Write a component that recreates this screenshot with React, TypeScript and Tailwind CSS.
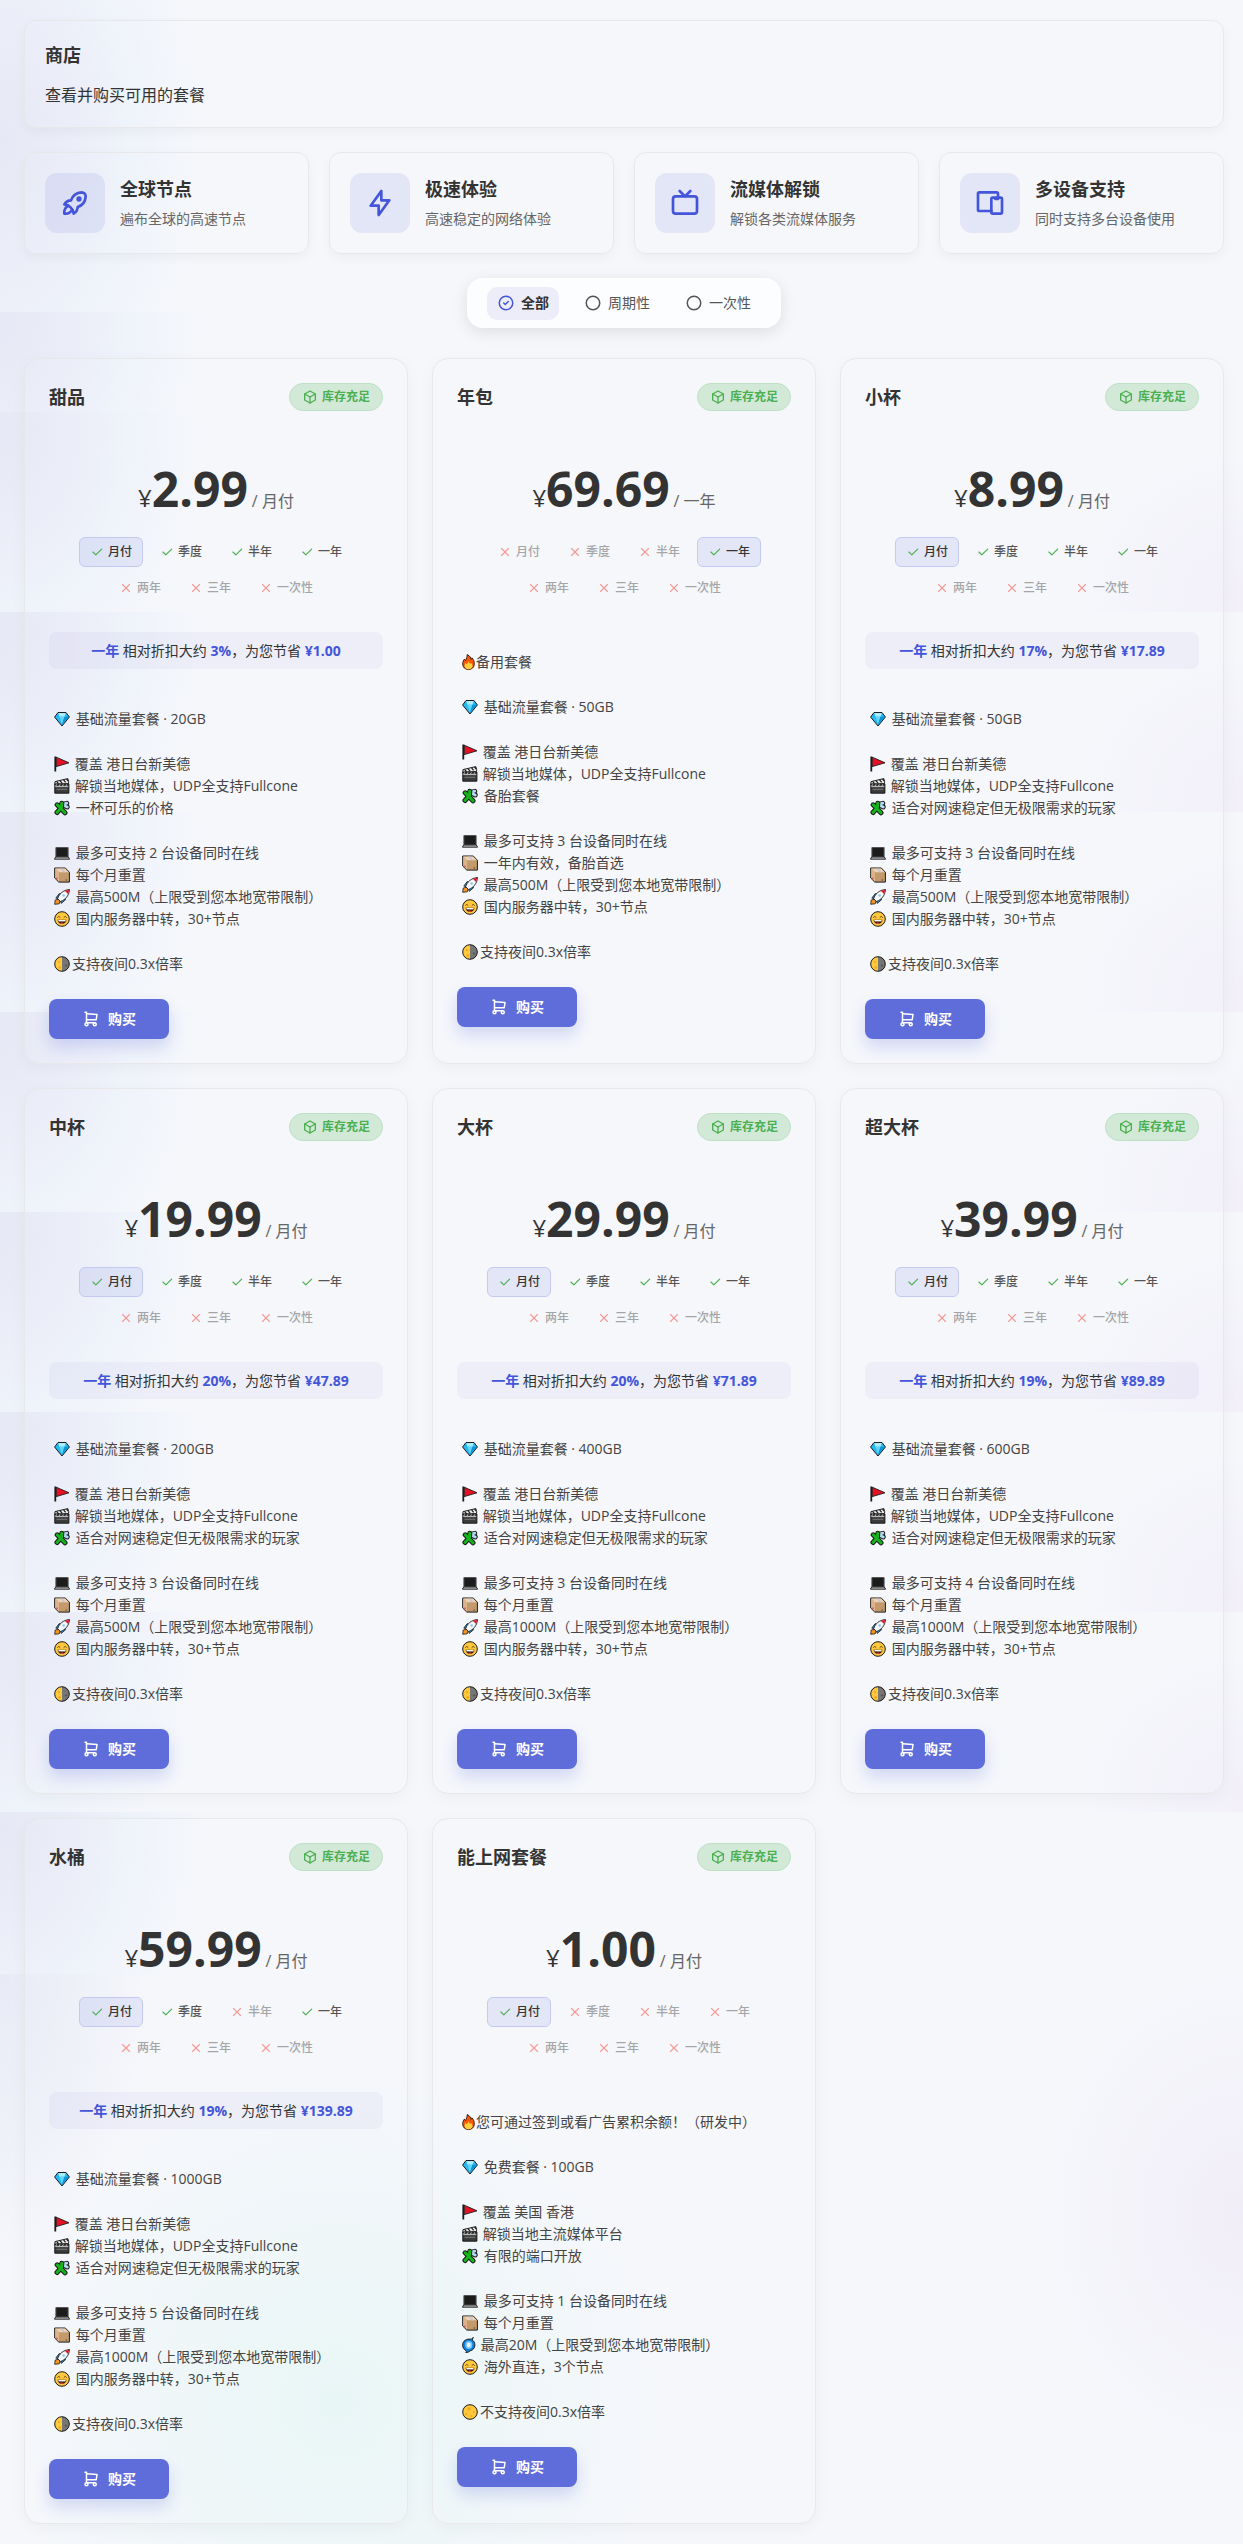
import { useState } from "react";
import type { ReactNode } from "react";
import {
  TbBolt,
  TbBox,
  TbCheck,
  TbCircle,
  TbCircleCheck,
  TbDevices,
  TbDeviceTv,
  TbRocket,
  TbShoppingCart,
  TbX,
} from "react-icons/tb";

const highlights = [
  { icon: TbRocket, title: "全球节点", text: "遍布全球的高速节点" },
  { icon: TbBolt, title: "极速体验", text: "高速稳定的网络体验" },
  { icon: TbDeviceTv, title: "流媒体解锁", text: "解锁各类流媒体服务" },
  { icon: TbDevices, title: "多设备支持", text: "同时支持多台设备使用" },
];

const filters = ["全部", "周期性", "一次性"];

const periods = ["月付", "季度", "半年", "一年", "两年", "三年", "一次性"];

type Line = [icon: string, text: string];

type Plan = {
  name: string;
  price: string;
  period: string;
  available: string[];
  discount?: { percent: string; saved: string };
  groups: Line[][];
};

const standard = (
  traffic: string,
  audience: string,
  devices: number,
  speed: string
): Line[][] => [
  [["gem", ` 基础流量套餐 · ${traffic}`]],
  [
    ["flag", " 覆盖 港日台新美德"],
    ["clapper", " 解锁当地媒体，UDP全支持Fullcone"],
    ["puzzle", ` ${audience}`],
  ],
  [
    ["laptop", ` 最多可支持 ${devices} 台设备同时在线`],
    ["box", " 每个月重置"],
    ["rocket", ` 最高${speed}（上限受到您本地宽带限制）`],
    ["smile", " 国内服务器中转，30+节点"],
  ],
  [["halfMoon", "支持夜间0.3x倍率"]],
];

const gamers = "适合对网速稳定但无极限需求的玩家";
const upToYear = ["月付", "季度", "半年", "一年"];

const plans: Plan[] = [
  {
    name: "甜品",
    price: "2.99",
    period: "月付",
    available: upToYear,
    discount: { percent: "3%", saved: "¥1.00" },
    groups: standard("20GB", "一杯可乐的价格", 2, "500M"),
  },
  {
    name: "年包",
    price: "69.69",
    period: "一年",
    available: ["一年"],
    groups: [
      [["fire", "备用套餐"]],
      [["gem", " 基础流量套餐 · 50GB"]],
      [
        ["flag", " 覆盖 港日台新美德"],
        ["clapper", " 解锁当地媒体，UDP全支持Fullcone"],
        ["puzzle", " 备胎套餐"],
      ],
      [
        ["laptop", " 最多可支持 3 台设备同时在线"],
        ["box", " 一年内有效，备胎首选"],
        ["rocket", " 最高500M（上限受到您本地宽带限制）"],
        ["smile", " 国内服务器中转，30+节点"],
      ],
      [["halfMoon", "支持夜间0.3x倍率"]],
    ],
  },
  {
    name: "小杯",
    price: "8.99",
    period: "月付",
    available: upToYear,
    discount: { percent: "17%", saved: "¥17.89" },
    groups: standard("50GB", gamers, 3, "500M"),
  },
  {
    name: "中杯",
    price: "19.99",
    period: "月付",
    available: upToYear,
    discount: { percent: "20%", saved: "¥47.89" },
    groups: standard("200GB", gamers, 3, "500M"),
  },
  {
    name: "大杯",
    price: "29.99",
    period: "月付",
    available: upToYear,
    discount: { percent: "20%", saved: "¥71.89" },
    groups: standard("400GB", gamers, 3, "1000M"),
  },
  {
    name: "超大杯",
    price: "39.99",
    period: "月付",
    available: upToYear,
    discount: { percent: "19%", saved: "¥89.89" },
    groups: standard("600GB", gamers, 4, "1000M"),
  },
  {
    name: "水桶",
    price: "59.99",
    period: "月付",
    available: ["月付", "季度", "一年"],
    discount: { percent: "19%", saved: "¥139.89" },
    groups: standard("1000GB", gamers, 5, "1000M"),
  },
  {
    name: "能上网套餐",
    price: "1.00",
    period: "月付",
    available: ["月付"],
    groups: [
      [["fire", "您可通过签到或看广告累积余额！（研发中）"]],
      [["gem", " 免费套餐 · 100GB"]],
      [
        ["flag", " 覆盖 美国 香港"],
        ["clapper", " 解锁当地主流媒体平台"],
        ["puzzle", " 有限的端口开放"],
      ],
      [
        ["laptop", " 最多可支持 1 台设备同时在线"],
        ["box", " 每个月重置"],
        ["cyclone", " 最高20M（上限受到您本地宽带限制）"],
        ["smile", " 海外直连，3个节点"],
      ],
      [["fullMoon", "不支持夜间0.3x倍率"]],
    ],
  },
];

// 16px pictograms, each in a cell of its own width
const emojis: Record<string, { width: number; art: ReactNode }> = {
  gem: {
    width: 18,
    art: (
      <>
        <path d="M4 1.5h8L15.4 6 8 15 .6 6z" fill="#29b9f2" stroke="#1a1a1a" />
        <path d="M4.3 2h7.4l-1.2 3.8h-5z" fill="#a9edff" />
        <path d="M5.5 5.8h5L8 13.6z" fill="#5fd6ff" />
        <path d="M10.5 5.8h4.2L8 13.6z" fill="#0c93d6" />
      </>
    ),
  },
  flag: {
    width: 17,
    art: (
      <>
        <path d="M2.2 1.2 15 6.8 2.2 10.6z" fill="#e81123" stroke="#1a1a1a" strokeWidth=".9" />
        <path d="M1.3.5v15" stroke="#1a1a1a" strokeWidth="1.8" />
      </>
    ),
  },
  clapper: {
    width: 17,
    art: (
      <>
        <path d="M.8 6.3 1 3.6 13.8.6l.8 2.8v2.2z" fill="#eee" stroke="#222" />
        <path d="m2.6 3.4 2 2.4M6 2.6l2 2.6M9.6 1.8l2 2.6M12.6 1l1.6 2" stroke="#222" strokeWidth="1.3" />
        <path d="M.8 6h14.1v9.2H.8z" fill="#3b3b3b" stroke="#1a1a1a" />
        <path d="M1.4 8.6h12.9M2.6 6.4 1.6 8.2m4.4-1.8L5 8.2m4.4-1.8-1 1.8m4.4-1.8-1 1.8" stroke="#d5d5d5" strokeWidth=".9" />
        <path d="M2.6 11.3h10.6" stroke="#8a8a8a" strokeWidth=".8" />
      </>
    ),
  },
  puzzle: {
    width: 18,
    art: (
      <g strokeLinecap="round">
        <path d="m10 4 2.8-.8M11 6l2.300 1" stroke="#1a1a1a" strokeWidth="4.800" />
        <path d="m10 4 2.800-.8M11 6l2.300 1" stroke="#b5dcf5" strokeWidth="2.800" />
        <path d="m3.200 4.800 7.800 8M7.800 3.200l-.3 4.300-4.500 5" stroke="#1a1a1a" strokeWidth="5" />
        <path d="m3.200 4.800 7.800 8M7.800 3.200l-.3 4.300-4.500 5" stroke="#16b51c" strokeWidth="3" />
      </g>
    ),
  },
  laptop: {
    width: 18,
    art: (
      <>
        <path d="M1.9 2.5h12.2v9.4H1.9z" fill="#1c1c1c" stroke="#555" />
        <path d="M1.7 12h12.6l1.3 2.2H.4z" fill="#b9b9b9" stroke="#1a1a1a" strokeWidth=".9" />
      </>
    ),
  },
  box: {
    width: 18,
    art: (
      <>
        <path d="M.7 1h10.6l4.1 4.3v9.8H4.8L.7 11z" fill="#c49a6c" stroke="#1a1a1a" />
        <path d="M1.2 1.5h9.9l3.7 3.8H5z" fill="#ecd3b4" />
        <path d="M1.2 1.6 5 5.3v9.3l-3.8-3.8z" fill="#dcb48a" />
        <path d="m6 1.5 3.6 3.8h2L8 1.5z" fill="#c8c0e0" />
        <path d="M3 10.5V12" stroke="#e0254f" />
        <path d="M11.5 13h1.6" stroke="#5a4228" />
      </>
    ),
  },
  rocket: {
    width: 18,
    art: (
      <>
        <path d="M.7 15.3 1.2 11l3.6-.8 1.4 1.6-1 3z" fill="#f7941d" stroke="#1a1a1a" strokeWidth=".8" />
        <path d="m1.8 9.1 3.4-4.500 3 .7-3 4.600zM7.200 14.400l4.300-3.600-.7-2.700-4.600 3z" fill="#1f9ce0" stroke="#1a1a1a" strokeWidth=".8" />
        <path d="M3.600 9.700C5.200 4.800 9 1.200 15.500.5c-.6 6.300-4.100 10.200-8.900 12z" fill="#f4f6fa" stroke="#1a1a1a" strokeWidth=".9" />
        <path d="M11 1.9 15.200.8l-1.100 4.300z" fill="#e81123" />
        <circle cx="9.6" cy="6.5" r="1.3" fill="#8ec9ef" />
      </>
    ),
  },
  smile: {
    width: 18,
    art: (
      <>
        <circle cx="8" cy="8" r="7.3" fill="#ffc83d" stroke="#1a1a1a" />
        <path d="M3.3 6.6q1.5-2.4 3 0M9.7 6.6q1.5-2.4 3 0" fill="none" stroke="#5c3a10" strokeWidth=".9" />
        <path d="M3.6 8.7h8.8a4.4 4.4 0 0 1-8.8 0z" fill="#3a1c0c" />
        <path d="M4.4 9h7.2v1.4H4.4z" fill="#fff" />
        <path d="M5.8 12.3q2.2-1.5 4.4 0-2.2 1.3-4.4 0z" fill="#e8453c" />
      </>
    ),
  },
  halfMoon: {
    width: 18,
    art: (
      <>
        <circle cx="8" cy="8" r="7.3" fill="#ffc83d" />
        <path d="M8 .7a7.3 7.3 0 0 1 0 14.6z" fill="#767676" />
        <circle cx="8" cy="8" r="7.3" fill="none" stroke="#1a1a1a" />
        <circle cx="5" cy="6" r="1" fill="#eba70f" />
        <circle cx="5.8" cy="11.5" r="1.2" fill="#eba70f" />
        <circle cx="12" cy="9.5" r="1" fill="#4f4f4f" />
      </>
    ),
  },
  fullMoon: {
    width: 18,
    art: (
      <>
        <circle cx="8" cy="8" r="7.3" fill="#ffc83d" stroke="#1a1a1a" />
        <circle cx="7" cy="5" r="1.7" fill="#f0ab1c" />
        <circle cx="11.8" cy="8" r="1" fill="#f0ab1c" />
        <circle cx="4.2" cy="10" r="1.1" fill="#f0ab1c" />
        <circle cx="9.5" cy="12" r="1.1" fill="#f0ab1c" />
      </>
    ),
  },
  fire: {
    width: 14,
    art: (
      <>
        <path
          d="M5.2.6c3 1.3 3.6 3.2 3.7 4.900.8-.3 1-.9 1-1.700 1.800 1.800 2.400 4 2.400 6.100 0 3.400-2.400 5.600-5.800 5.600S.7 13.300.7 10c0-2.300.8-3.600 1.800-5 .2.900.5 1.300 1.100 1.600C4.400 4.600 5.200 2.900 5.200.6z"
          fill="#f7580b"
          stroke="#2a1608"
          strokeWidth=".9"
        />
        <path d="M6.600 7.200c.4 1.600 1 1.900 1.700 2.600.5-.2.700-.6.800-1.100 1 1.300 1.400 2.300 1.400 3.300 0 2-1.600 3.200-4 3.200S2.600 14 2.600 12c0-1.300.5-2.200 1.200-2.900.2.600.5.900 1 1C5.600 9.200 6.400 8.400 6.600 7.200z" fill="#ffd23a" />
      </>
    ),
  },
  cyclone: {
    width: 15,
    art: (
      <>
        <path
          d="M11.500.5c-1.200.4-1.700 1-2.100 1.700C4.300 1.300.6 4 .6 8.100c0 2.700 1.600 4.700 3.500 5.700.5.900.2 1.300-.4 1.700 2 0 3.300-.5 4.300-1.600 3-.6 4.900-3 4.900-6 0-2.200-1-3.800-2.500-4.800 0-1.100.3-1.800 1.100-2.600z"
          fill="#0f7fdc"
          stroke="#1a1a1a"
          strokeWidth=".9"
        />
        <ellipse cx="6.8" cy="8" rx="3.6" ry="4" fill="#7cc7f7" />
        <ellipse cx="6.8" cy="8" rx="1.8" ry="2.2" fill="#eef8ff" />
      </>
    ),
  },
};

function Emoji({ name }: { name: string }) {
  const { width, art } = emojis[name];
  return (
    <svg
      width={width}
      height="16"
      viewBox={`0 0 ${width} 16`}
      fill="none"
      className="shrink-0"
      aria-hidden="true"
    >
      {art}
    </svg>
  );
}

const leftGlow =
  "bg-[radial-gradient(ellipse_200px_280px_at_0%_10%,#e6e8f5_0%,#ebedf8_35%,#eff3fa_65%,transparent_100%)]";
const bothGlow =
  "bg-[radial-gradient(ellipse_200px_280px_at_0%_10%,#e6e8f5_0%,#ebedf8_35%,#eff3fa_65%,transparent_100%),radial-gradient(ellipse_160px_140px_at_100%_90%,#f2eff9_0%,transparent_100%)]";

// Soft colour bands behind the cards
function Backdrop() {
  return (
    <div className="absolute inset-0 -z-10 flex flex-col" aria-hidden="true">
      <div className="h-[312px] bg-[radial-gradient(ellipse_200px_340px_at_0%_45%,#e6e8f5_0%,#ebedf8_35%,#eff3fa_65%,transparent_100%)]" />
      <div className={`h-[100px] ${leftGlow}`} />
      <div className={`h-[200px] ${bothGlow}`} />
      <div className={`h-[200px] ${bothGlow}`} />
      <div className={`h-[200px] ${bothGlow}`} />
      <div className={`h-[200px] ${bothGlow}`} />
      <div className={`h-[200px] ${bothGlow}`} />
      <div className={`h-[200px] ${bothGlow}`} />
      <div className={`h-[200px] ${bothGlow}`} />
      <div className={`h-[162px] ${leftGlow}`} />
      <div className="flex-1 bg-[radial-gradient(ellipse_150px_300px_at_0%_0%,#e8eaf6_0%,transparent_100%),radial-gradient(circle_320px_at_27%_75%,#e9f6f6_0%,transparent_100%),radial-gradient(ellipse_200px_240px_at_100%_42%,#f1edf8_0%,transparent_100%)]" />
    </div>
  );
}

function PlanCard({ plan }: { plan: Plan }) {
  return (
    <article className="rounded-2xl border border-[#e8e8ea] p-6 shadow-[0_4px_16px_rgba(0,0,0,0.04)]">
      <div className="flex items-center justify-between">
        <h2 className="text-lg font-bold leading-7">{plan.name}</h2>
        <span className="flex h-7 items-center gap-1 rounded-full border border-[#bde0c2] bg-[#d2e9d8] px-3 text-xs font-bold text-[#4caf50]">
          <TbBox size={16} aria-hidden="true" />
          库存充足
        </span>
      </div>

      <div className="mt-12 flex items-baseline justify-center">
        <span className="text-2xl font-medium">¥</span>
        <span className="text-5xl font-bold leading-[60px]">{plan.price}</span>
        <span className="ml-1 text-base text-[#666]">/ {plan.period}</span>
      </div>

      <div className="mt-[18px] flex flex-wrap justify-center gap-1.5">
        {periods.map((period) => {
          const enabled = plan.available.includes(period);
          const active = plan.period === period;
          return (
            <button
              key={period}
              type="button"
              disabled={!enabled}
              aria-pressed={active}
              className={`flex h-[30px] items-center gap-1 rounded-md border px-2.5 text-xs font-medium ${
                active
                  ? "border-[#c3c9f0] bg-[#4355d8]/10 text-[#333]"
                  : "border-transparent text-[#555] disabled:opacity-50"
              }`}
            >
              {enabled ? (
                <TbCheck size={14} className="text-[#4caf50]" aria-hidden="true" />
              ) : (
                <TbX size={14} className="text-[#f44336]" aria-hidden="true" />
              )}
              {period}
            </button>
          );
        })}
      </div>

      {plan.discount && (
        <p className="mt-[29px] rounded-lg bg-[#6450c8]/5 text-center text-sm leading-[37px]">
          <b className="text-[#4355d8]">一年</b> 相对折扣大约{" "}
          <b className="text-[#4355d8]">{plan.discount.percent}</b>，为您节省{" "}
          <b className="text-[#4355d8]">{plan.discount.saved}</b>
        </p>
      )}

      <div
        className={`flex flex-col gap-[23px] px-[5px] text-sm leading-[22px] text-[#444] ${
          plan.discount ? "mt-[39px]" : "mt-12"
        }`}
      >
        {plan.groups.map((group) => (
          <ul key={group[0][1]}>
            {group.map(([icon, text]) => (
              <li key={text} className="flex items-center whitespace-pre">
                <Emoji name={icon} />
                {text}
              </li>
            ))}
          </ul>
        ))}
      </div>

      <button
        type="button"
        className="mt-6 flex h-10 w-[120px] items-center justify-center gap-2 rounded-lg bg-[#5f6dda] text-sm font-bold text-white shadow-[0_8px_16px_rgba(67,85,216,0.2)]"
      >
        <TbShoppingCart size={18} aria-hidden="true" />
        购买
      </button>
    </article>
  );
}

export default function App() {
  const [filter, setFilter] = useState(filters[0]);

  return (
    <main className="relative isolate bg-[#f5f7fb] py-5 pl-6 pr-[19px] font-['Open_Sans','Noto_Sans_CJK_SC',sans-serif] text-[#333]">
      <Backdrop />

      <header className="rounded-xl border border-[#e8e8ea] p-5 shadow-[0_4px_12px_rgba(0,0,0,0.04)]">
        <h1 className="text-lg font-bold leading-7">商店</h1>
        <p className="mt-3.5 text-base leading-6">查看并购买可用的套餐</p>
      </header>

      <section className="mt-6 grid gap-5 sm:grid-cols-2 lg:grid-cols-4">
        {highlights.map(({ icon: Icon, title, text }) => (
          <article
            key={title}
            className="flex items-center gap-[15px] rounded-xl border border-[#e8e8ea] p-5 shadow-[0_4px_12px_rgba(0,0,0,0.04)]"
          >
            <div className="flex h-[60px] w-[60px] shrink-0 items-center justify-center rounded-xl bg-[#4355d8]/10 text-[#4355d8]">
              <Icon size={32} aria-hidden="true" />
            </div>
            <div>
              <h3 className="text-lg font-bold leading-7">{title}</h3>
              <p className="mt-1 text-sm leading-6 text-[#666]">{text}</p>
            </div>
          </article>
        ))}
      </section>

      <fieldset className="mx-auto mt-6 flex h-[50px] w-fit items-center gap-[15px] rounded-2xl bg-[#fcfdfe] px-5 shadow-[0_4px_16px_rgba(0,0,0,0.1)]">
        {filters.map((name) => {
          const active = filter === name;
          return (
            <label
              key={name}
              className={`relative flex h-[33px] items-center gap-1.5 rounded-[10px] px-2.5 text-sm ${
                active ? "bg-[#ededfa] font-bold" : "text-[#555]"
              }`}
            >
              <input
                type="radio"
                name="filter"
                className="sr-only"
                checked={active}
                onChange={() => setFilter(name)}
              />
              {active ? (
                <TbCircleCheck size={18} className="text-[#4355d8]" aria-hidden="true" />
              ) : (
                <TbCircle size={18} aria-hidden="true" />
              )}
              {name}
            </label>
          );
        })}
      </fieldset>

      <section className="mt-[30px] grid gap-6 md:grid-cols-2 lg:grid-cols-3">
        {plans.map((plan) => (
          <PlanCard key={plan.name} plan={plan} />
        ))}
      </section>
    </main>
  );
}
